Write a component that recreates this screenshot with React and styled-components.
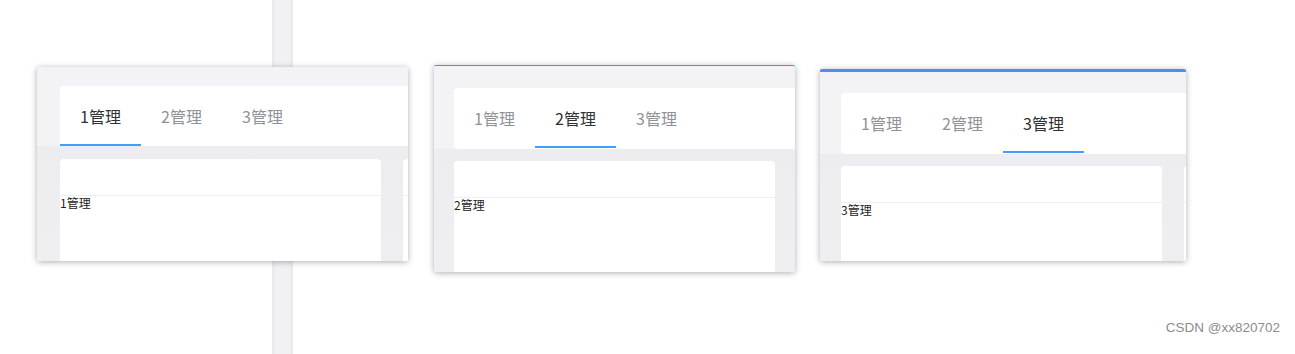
import React from 'react'
import styled, { createGlobalStyle } from 'styled-components'

const GlobalStyle = createGlobalStyle`
  html, body {
    margin: 0;
    padding: 0;
    background: #fff;
  }
  body {
    font-family: "Noto Sans CJK SC", "Noto Sans", sans-serif;
  }
`

const Page = styled.div`
  width: 1295px;
  height: 354px;
  overflow: hidden;
  display: flex;
  flex-direction: column;
  background:
    linear-gradient(90deg,
      transparent 272px,
      #e9e9ec 272px,
      #f1f1f4 276px,
      #f1f1f4 289px,
      #e9e9ec 293px,
      transparent 293px);
`

const Row = styled.div`
  display: flex;
  align-items: flex-start;
  height: 320px;
`

const Shot = styled.div`
  margin-left: ${p => p.left}px;
  margin-top: ${p => p.top}px;
  width: ${p => p.w}px;
  height: ${p => p.h}px;
  box-sizing: border-box;
  border-top: ${p => p.bar}px solid #4f8cf6;
  background: #f3f3f6;
  box-shadow: 0 1px 6px rgba(0, 0, 0, 0.32);
  border-radius: 2px;
  overflow: hidden;
  display: flex;
  flex-direction: column;
  padding-left: ${p => p.padL}px;
  padding-top: ${p => p.padT}px;
`

const TabBar = styled.div`
  flex: none;
  width: 700px;
  height: ${p => p.h}px;
  background: #fff;
  border-radius: 4px;
  display: flex;
  align-items: stretch;
  box-shadow: 0 1px 0 #ececef;
`

const Tab = styled.div`
  position: relative;
  width: 81px;
  display: flex;
  align-items: center;
  justify-content: center;
  font-size: 16px;
  color: ${p => (p.active ? '#303133' : '#8f9296')};
  padding-bottom: ${p => p.drop}px;
  box-sizing: border-box;

  &::after {
    content: '';
    position: absolute;
    left: 0;
    right: 0;
    bottom: ${p => p.lineOff}px;
    height: 2px;
    background: ${p => (p.active ? '#409eff' : 'transparent')};
  }
`

const Body = styled.div`
  flex: 1;
  display: flex;
  gap: 22px;
  margin-left: -${p => p.padL}px;
  padding-left: ${p => p.padL}px;
  padding-top: ${p => p.gap}px;
  background: linear-gradient(180deg, #ededf0 0, #f0f0f3 100%);
`

const Card = styled.div`
  flex: none;
  width: 321px;
  height: 200px;
  background: #fff;
  border-radius: 4px;
  display: flex;
  flex-direction: column;
`

const CardHead = styled.div`
  height: 36px;
  border-bottom: 1px solid #ebeef5;
`

const CardText = styled.div`
  font-size: 12px;
  line-height: 14px;
  color: #222;
`

const Footer = styled.div`
  display: flex;
  justify-content: flex-end;
  padding-right: 15px;
  font-family: "Liberation Sans", Arial, sans-serif;
  font-size: 13.5px;
  color: #8c8c8c;
  text-shadow: 0 0 2px #fff;
`

const tabs = ['1管理', '2管理', '3管理']

const shots = [
  { left: 37, top: 67, w: 371, h: 194, bar: 0, padL: 23, padT: 19, barH: 60, gap: 13, lineOff: 0 },
  { left: 26, top: 65, w: 361, h: 207, bar: 1, padL: 20, padT: 22, barH: 61, gap: 12, lineOff: 1 },
  { left: 25, top: 69, w: 366, h: 192, bar: 3, padL: 21, padT: 21, barH: 61, gap: 12, lineOff: 1 },
]

function Screenshot({ s, active }) {
  return (
    <Shot left={s.left} top={s.top} w={s.w} h={s.h} bar={s.bar} padL={s.padL} padT={s.padT}>
      <TabBar h={s.barH}>
        {tabs.map((t, i) => (
          <Tab key={t} active={i === active} lineOff={s.lineOff} drop={s.lineOff}>
            {t}
          </Tab>
        ))}
      </TabBar>
      <Body padL={s.padL} gap={s.gap}>
        <Card>
          <CardHead />
          <CardText>{tabs[active]}</CardText>
        </Card>
        <Card>
          <CardHead />
        </Card>
      </Body>
    </Shot>
  )
}

export default function App() {
  return (
    <>
      <GlobalStyle />
      <Page>
        <Row>
          {shots.map((s, i) => (
            <Screenshot key={i} s={s} active={i} />
          ))}
        </Row>
        <Footer>CSDN @xx820702</Footer>
      </Page>
    </>
  )
}
